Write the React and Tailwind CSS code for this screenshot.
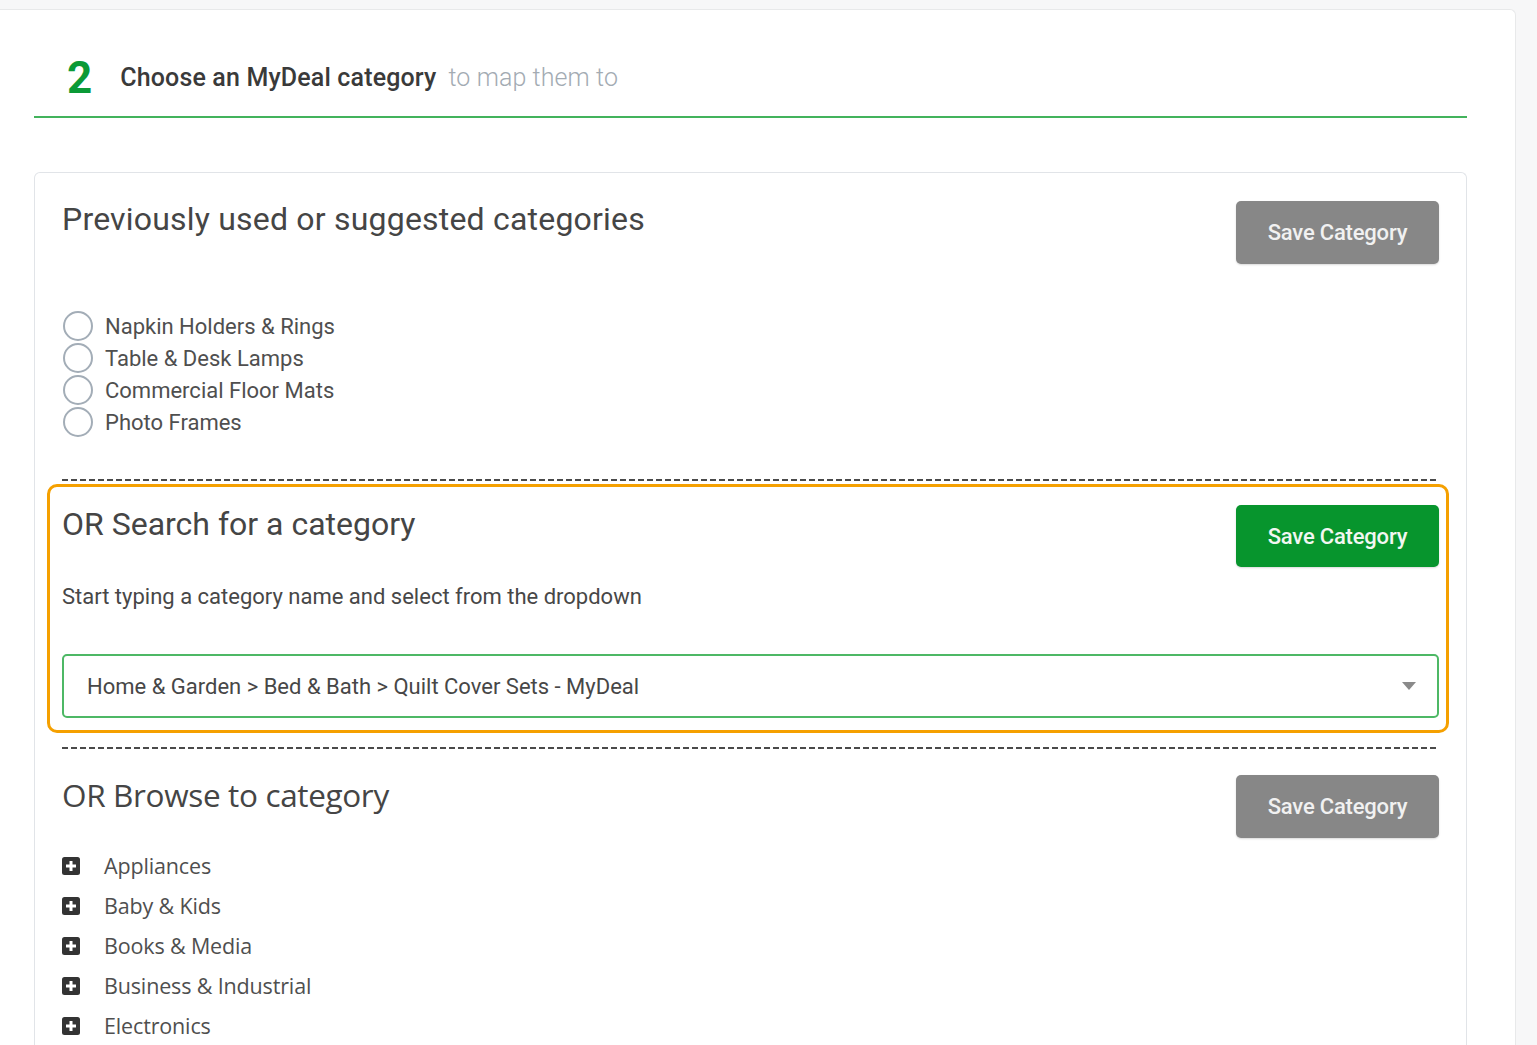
import React from 'react';

const suggested = ['Napkin Holders & Rings', 'Table & Desk Lamps', 'Commercial Floor Mats', 'Photo Frames'];
const tree = ['Appliances', 'Baby & Kids', 'Books & Media', 'Business & Industrial', 'Electronics'];

const SaveButton = ({ active }) => (
  <button
    className={
      active
        ? 'w-[203px] h-[62px] rounded-[5px] bg-[#07952d] text-[#f2f7f2] text-[22px] font-medium tracking-[-0.2px] shadow-[0_1px_2px_rgba(0,0,0,0.15)] shrink-0'
        : 'w-[203px] h-[63px] rounded-[5px] bg-[#878787] text-[#f1f1f1] text-[22px] font-medium tracking-[-0.2px] shadow-[0_1px_2px_rgba(0,0,0,0.15)] shrink-0'
    }
  >
    Save Category
  </button>
);

const Dashed = () => (
  <div className="h-[2px] bg-[repeating-linear-gradient(to_right,#4a4a4a_0_6px,transparent_6px_9px)]" />
);

const PlusBox = () => (
  <svg width="18" height="18" viewBox="0 0 18 18" className="shrink-0">
    <rect x="0" y="0" width="18" height="18" rx="2.5" fill="#333" />
    <path d="M9 4v10M4 9h10" stroke="#fff" strokeWidth="3" />
  </svg>
);

export default function App() {
  return (
    <div className="min-h-screen bg-[#f7f7f8] pt-[9px] font-['Roboto',sans-serif]">
      <div className="w-[1516px] bg-white border-t border-r border-[#e8e9ea] rounded-tr-[6px] pl-[34px] pr-[48px] pb-10">
        {/* step header */}
        <div className="flex items-center pl-[33px] pt-[43px] pb-[13px] border-b-2 border-[#43b35c]">
          <span className="text-[44px] leading-[50px] font-bold text-[#0b9a36]">2</span>
          <span className="ml-[28px] text-[25px] font-medium text-[#3a3a3a] tracking-[0.15px]">Choose an MyDeal category</span>
          <span className="ml-[12px] text-[25px] font-light text-[#a3abb3] tracking-[0.1px]">to map them to</span>
        </div>

        <div className="mt-[54px] border border-b-0 border-[#e1e4e8] rounded-t-[6px] px-[27px] pt-[28px]">
          {/* suggested */}
          <div className="flex justify-between items-start">
            <h2 className="text-[32px] leading-[36px] text-[#454545] tracking-[0.2px]">Previously used or suggested categories</h2>
            <SaveButton />
          </div>
          <div className="mt-[46px] flex flex-col">
            {suggested.map((s) => (
              <label key={s} className="flex items-center h-[32px]">
                <span className="w-[30px] h-[30px] rounded-full border-2 border-[#a3adb7] ml-px" />
                <span className="ml-[12px] text-[22px] text-[#4f4f4f]">{s}</span>
              </label>
            ))}
          </div>
          <div className="mt-[41px]">
            <Dashed />
          </div>

          {/* search */}
          <div className="mt-[3px] -ml-[15px] -mr-[10px] border-[3px] border-[#f5a000] rounded-[10px] pl-[12px] pr-[7px] pt-[18px] pb-[12px]">
            <div className="flex justify-between items-start">
              <h2 className="mt-[1px] text-[32px] leading-[36px] text-[#454545]">OR Search for a category</h2>
              <SaveButton active />
            </div>
            <p className="mt-[18px] text-[22px] text-[#474747] leading-[24px]">Start typing a category name and select from the dropdown</p>
            <div className="mt-[45px] h-[64px] border-2 border-[#4db865] rounded-[5px] flex items-center justify-between pl-[23px] pr-[21px]">
              <span className="text-[22px] text-[#474747]">Home &amp; Garden &gt; Bed &amp; Bath &gt; Quilt Cover Sets - MyDeal</span>
              <svg width="14" height="8" viewBox="0 0 14 8">
                <path d="M0 0h14L7 8z" fill="#8a8a8a" />
              </svg>
            </div>
          </div>
          <div className="mt-[14px]">
            <Dashed />
          </div>

          {/* browse */}
          <div className="mt-[26px] flex justify-between items-start">
            <h2 className="mt-[2px] text-[31.5px] leading-[36px] text-[#454545] font-['Open_Sans',sans-serif] tracking-[-0.35px]">OR Browse to category</h2>
            <SaveButton />
          </div>
          <ul className="mt-[8px] flex flex-col font-['Open_Sans',sans-serif]">
            {tree.map((t) => (
              <li key={t} className="flex items-center h-[40px]">
                <PlusBox />
                <span className="ml-[24px] text-[21.5px] text-[#4f4f4f] tracking-[-0.15px]">{t}</span>
              </li>
            ))}
          </ul>
        </div>
      </div>
    </div>
  );
}
